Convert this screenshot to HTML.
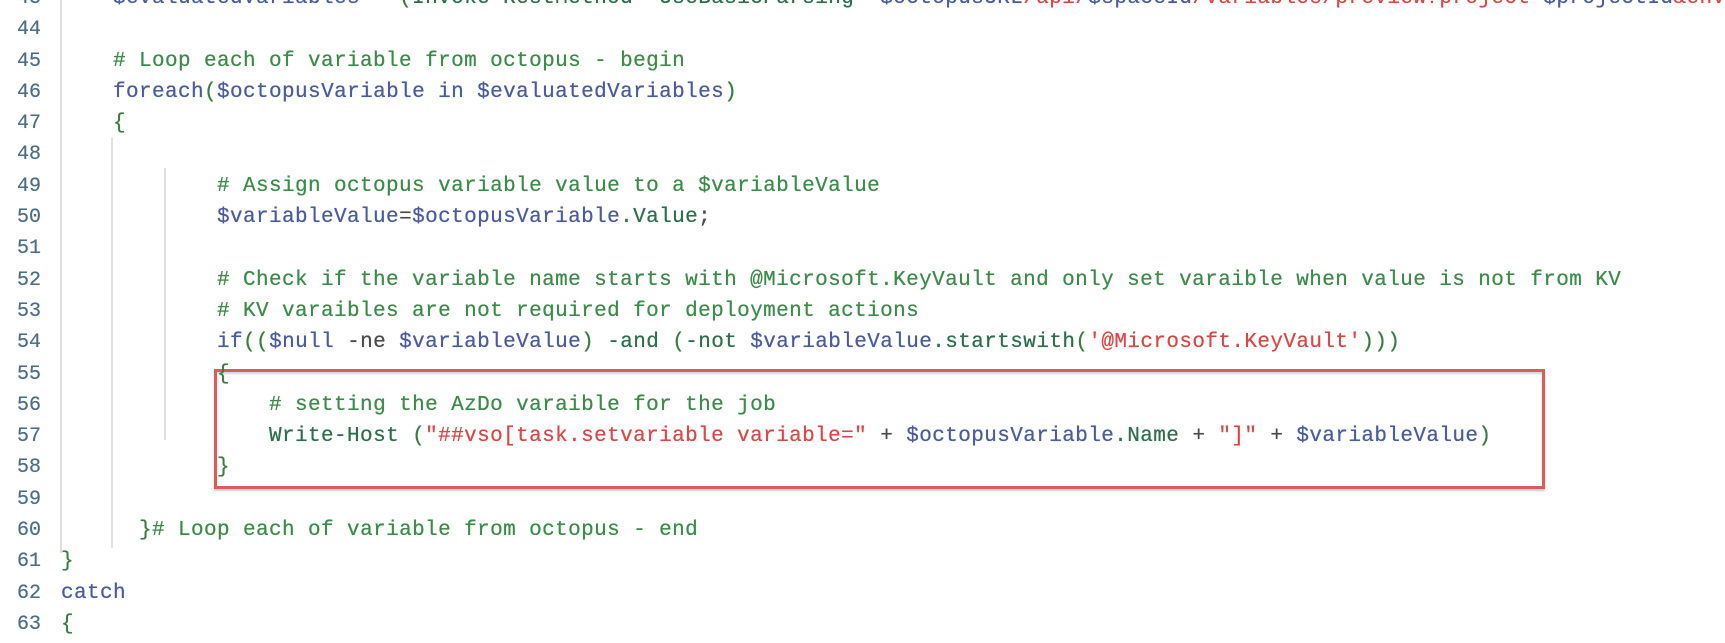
<!DOCTYPE html>
<html><head><meta charset="utf-8"><style>
html,body{margin:0;padding:0;background:#fff;width:1725px;height:643px;overflow:hidden;position:relative}
.code{position:absolute;left:61px;top:-17px;font-family:"Liberation Mono",monospace;font-size:21px;letter-spacing:0.4px;line-height:31.3px;white-space:pre;color:#3a3a3a;text-shadow:0 0 0.6px currentColor}
.nums{position:absolute;left:0;width:41px;top:-17px;font-family:"Liberation Mono",monospace;font-size:20px;line-height:31.3px;text-align:right;color:#4e6e86;white-space:pre;text-shadow:0 0 0.5px currentColor}
.c{color:#3d8a4a}.v{color:#4b5b9b}.s{color:#d84848}.m{color:#2f6d4f}.b{color:#3d7a45}.o{color:#4a4a4a}
.g{position:absolute;width:2px;background:#dde0dc}
.box{position:absolute;left:214px;top:369px;width:1325px;height:114px;border:3px solid #de5b5b;box-shadow:0 2px 2px #c9cdc9, inset 0 2px 2px #d0d4d0}
</style></head><body>
<div class="g" style="left:60px;top:0;height:553px"></div>
<div class="g" style="left:111px;top:138px;height:410px"></div>
<div class="g" style="left:164px;top:168px;height:272px"></div>
<div class="nums">43
44
45
46
47
48
49
50
51
52
53
54
55
56
57
58
59
60
61
62
63</div>
<div class="box"></div>
<div class="code">    <span class="v">$evaluatedVariables</span> <span class="o">=</span> <span class="b">(</span><span class="m">Invoke-RestMethod</span> <span class="m">-UseBasicParsing</span> <span class="s">"</span><span class="v">$octopusURL</span><span class="s">/api/</span><span class="v">$spaceId</span><span class="s">/variables/preview?project=</span><span class="v">$projectId</span><span class="s">&amp;envi</span>

    <span class="c"># Loop each of variable from octopus - begin</span>
    <span class="v">foreach</span><span class="b">(</span><span class="v">$octopusVariable</span> <span class="v">in</span> <span class="v">$evaluatedVariables</span><span class="b">)</span>
    <span class="b">{</span>

            <span class="c"># Assign octopus variable value to a $variableValue</span>
            <span class="v">$variableValue</span><span class="o">=</span><span class="v">$octopusVariable</span><span class="m">.Value</span><span class="o">;</span>

            <span class="c"># Check if the variable name starts with @Microsoft.KeyVault and only set varaible when value is not from KV</span>
            <span class="c"># KV varaibles are not required for deployment actions</span>
            <span class="v">if</span><span class="b">((</span><span class="v">$null</span> <span class="o">-ne</span> <span class="v">$variableValue</span><span class="b">)</span> <span class="m">-and</span> <span class="b">(</span><span class="m">-not</span> <span class="v">$variableValue</span><span class="m">.startswith</span><span class="b">(</span><span class="s">'@Microsoft.KeyVault'</span><span class="b">)))</span>
            <span class="b">{</span>
                <span class="c"># setting the AzDo varaible for the job</span>
                <span class="m">Write-Host</span> <span class="b">(</span><span class="s">"##vso[task.setvariable variable="</span> <span class="o">+</span> <span class="v">$octopusVariable</span><span class="m">.Name</span> <span class="o">+</span> <span class="s">"]"</span> <span class="o">+</span> <span class="v">$variableValue</span><span class="b">)</span>
            <span class="b">}</span>

      <span class="b">}</span><span class="c"># Loop each of variable from octopus - end</span>
<span class="b">}</span>
<span class="v">catch</span>
<span class="b">{</span></div>
</body></html>
